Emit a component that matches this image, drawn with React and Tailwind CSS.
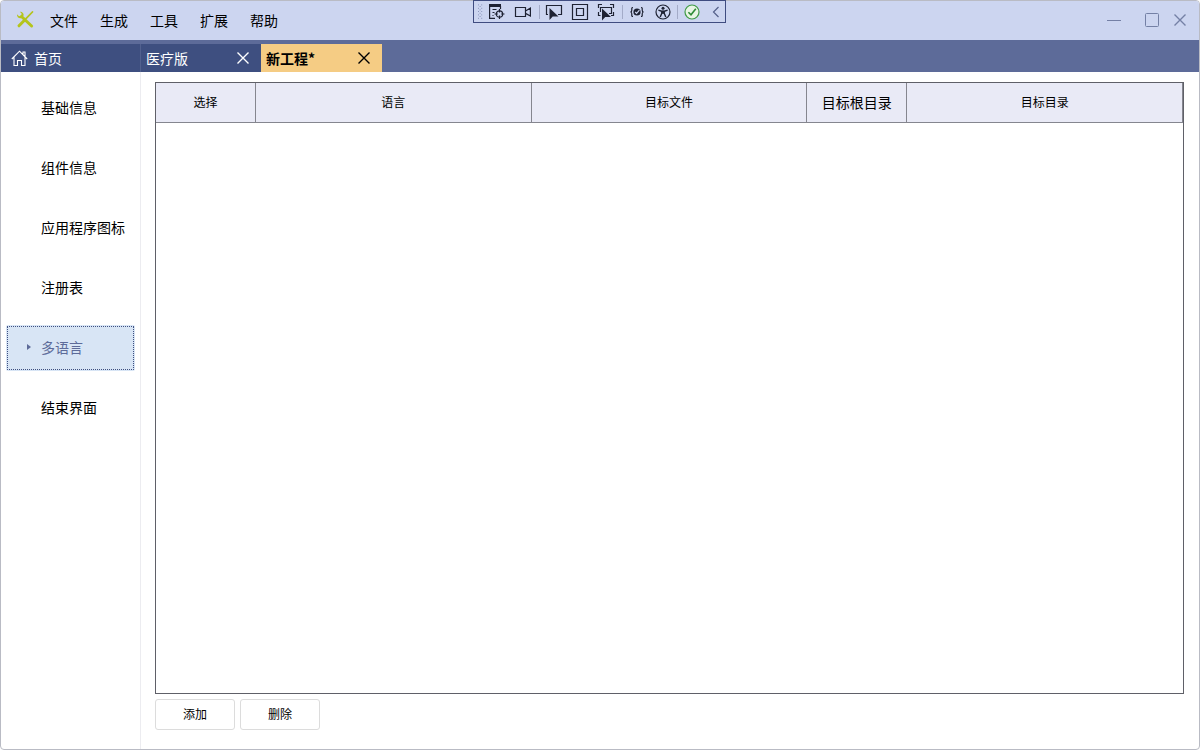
import React, { useState } from 'react'

const menuItems = ['文件', '生成', '工具', '扩展', '帮助']

const sections = ['基础信息', '组件信息', '应用程序图标', '注册表', '多语言', '结束界面']

const columns = [
  { label: '选择', className: 'w-[100px] text-xs' },
  { label: '语言', className: 'text-xs' },
  { label: '目标文件', className: 'text-xs' },
  { label: '目标根目录', className: 'w-[100px] text-sm' },
  { label: '目标目录', className: 'text-xs' }
]

const CloseIcon = () => (
  <svg width="14" height="14" viewBox="0 0 14 14" fill="none" stroke="currentColor" strokeWidth="1.4">
    <path d="M1.5 1.5l11 11M12.5 1.5l-11 11" />
  </svg>
)

const LogoIcon = () => (
  <svg width="18" height="18" viewBox="0 0 18 18" fill="none" aria-hidden="true">
    <path d="M5.5 5.5L15.6 15" stroke="#b4c41c" strokeWidth="3" strokeLinecap="round" />
    <path d="M1 3.2L3 5.2L5.2 4.4L5.6 2.4L3.8 .7C6.2 .3 8 2.2 7.6 4.4L5.3 7.2C2.8 7.8 .7 5.8 1 3.2z" fill="#b4c41c" />
    <path d="M16.4 1L9.5 8.2" stroke="#b4c41c" strokeWidth="1.8" strokeLinecap="round" />
    <path d="M8 9.8L3 14.8" stroke="#b4c41c" strokeWidth="3" strokeLinecap="round" />
  </svg>
)

const HomeIcon = () => (
  <svg width="17" height="17" viewBox="0 0 17 17" fill="none" stroke="currentColor" strokeWidth="1.1" aria-hidden="true">
    <path d="M.8 9L8.5 1.2L16.2 9M12 4.6V2h2v4.6M3 7.2V15.5H6.5V10.5H10.5V15.5H14V7.2" />
  </svg>
)

const ToolIcon = ({ children }) => (
  <svg width="18" height="18" viewBox="0 0 18 18" fill="none" stroke="#1e2233" strokeWidth="1.2" aria-hidden="true">
    {children}
  </svg>
)

const ToolButton = ({ label, children }) => (
  <button type="button" aria-label={label} className="flex w-[18px] items-center justify-center">
    <ToolIcon>{children}</ToolIcon>
  </button>
)

const Divider = () => <span className="h-[14px] w-px bg-[#a3abc8]" />

const DebugToolbar = () => (
  <div className="absolute -top-px left-[472px] flex h-[23px] w-[253px] items-center border border-[#3f4c80] bg-[#ccd5f0] pl-1">
    <svg width="6" height="18" viewBox="0 0 6 18" fill="#6f7ba6" aria-hidden="true">
      {[0, 4, 8, 12, 16].map((y) => (
        <React.Fragment key={y}>
          <rect x="0" y={y} width="1" height="1" />
          <rect x="4" y={y} width="1" height="1" />
          {y < 16 && <rect x="2" y={y + 2} width="1" height="1" />}
        </React.Fragment>
      ))}
    </svg>
    <div className="flex items-center gap-2 pl-[5px]">
      <ToolButton label="实时可视化树">
        <path d="M1 2.5h12" strokeWidth="3" />
        <path d="M1.6 3V15.4H7M4.5 6.5h4M4.5 9.5h2M4.5 12.5h1M12.5 3v3" />
        <circle cx="11.5" cy="11" r="3.2" />
        <path d="M11.5 6v3.4M11.5 12.6v3.4M6.5 11h3.4M13.1 11h3.4" />
      </ToolButton>
      <ToolButton label="录制">
        <path d="M1.5 4.5h10v9h-10zM11.5 8L16.4 5v8L11.5 10.4" />
      </ToolButton>
    </div>
    <div className="flex items-center pl-[7px]">
      <Divider />
    </div>
    <div className="flex items-center gap-2 pl-[5px]">
      <ToolButton label="选择元素">
        <path d="M3 11.5H1.5V2.5h15v9H13" />
        <path d="M4.5 5V17l3.2-3.4 5.8-.2z" fill="#1e2233" stroke="none" />
      </ToolButton>
      <ToolButton label="布局装饰器">
        <path d="M1.5 1.5h15v15h-15zM5.5 5.5h7v7h-7z" />
      </ToolButton>
      <ToolButton label="跟踪焦点">
        <path d="M1.5 5V1.5H5M13 1.5h3.5V5M16.5 9v3.5H14M3.5 12.5H1.5V9M3.5 9V4.5h11v6h-2.5" />
        <path d="M5 5.5V17.5l3.2-3.4 5.8-.2z" fill="#1e2233" stroke="#ccd5f0" strokeWidth=".8" paintOrder="stroke" />
      </ToolButton>
    </div>
    <div className="flex items-center pl-[7px]">
      <Divider />
    </div>
    <div className="flex items-center gap-2 pl-[5px]">
      <ToolButton label="绑定失败">
        <path d="M5 4.5C3.4 4.5 3.8 5.8 3.8 7S3.2 9 2.4 9c.8 0 1.4.6 1.4 2s-.4 2.5 1.2 2.5M13 4.5c1.6 0 1.2 1.3 1.2 2.5s.6 2 1.4 2c-.8 0-1.4.6-1.4 2s.4 2.5-1.2 2.5" />
        <circle cx="9" cy="9" r="3.6" fill="#1e2233" stroke="none" />
        <path d="M7.2 9l1.4 1.4L11.4 7.2" stroke="#ccd5f0" />
      </ToolButton>
      <ToolButton label="辅助功能">
        <circle cx="9" cy="9" r="7" />
        <circle cx="9" cy="5.2" r="1.5" fill="#1e2233" stroke="none" />
        <path d="M4.4 7.2L7.6 8.2H10.4L13.6 7.2M7.8 8.2V10.4L6.2 14M10.2 8.2V10.4L11.8 14" strokeWidth="1.4" />
        <path d="M7.6 7.8h2.8v3H7.6z" fill="#1e2233" stroke="none" />
      </ToolButton>
    </div>
    <div className="flex items-center pl-[5px]">
      <Divider />
    </div>
    <div className="flex items-center gap-[6px] pl-[5px]">
      <ToolButton label="热重载">
        <circle cx="9" cy="9" r="7" fill="#e8f5e4" stroke="#3f9b46" />
        <path d="M5.4 9.2L8 11.8L12.8 5.8" stroke="#2e8b36" strokeWidth="1.6" />
      </ToolButton>
      <ToolButton label="收起">
        <path d="M11.5 4L6.5 9L11.5 14" stroke="#55608a" />
      </ToolButton>
    </div>
  </div>
)

const TitleBar = () => (
  <header className="flex h-[39px] shrink-0 items-center rounded-t-[3px] bg-[#ccd5f0] pb-px pl-[15px]">
    <LogoIcon />
    <nav className="flex gap-[22px] pl-4">
      {menuItems.map((item) => (
        <button key={item} type="button" className="text-sm">
          {item}
        </button>
      ))}
    </nav>
    <div className="ml-auto flex items-center pr-3 text-[#7480a5]">
      <button type="button" aria-label="最小化" className="mr-6">
        <svg width="14" height="14" viewBox="0 0 14 14" stroke="currentColor">
          <path d="M0 7.5h14" />
        </svg>
      </button>
      <button type="button" aria-label="最大化" className="mr-[14px]">
        <svg width="14" height="14" viewBox="0 0 14 14" fill="none" stroke="currentColor">
          <rect x=".5" y=".5" width="13" height="13" rx="1" />
        </svg>
      </button>
      <button type="button" aria-label="关闭">
        <CloseIcon />
      </button>
    </div>
  </header>
)

const TabBar = () => (
  <div className="flex h-8 shrink-0 bg-[#5d6b99] pt-1 text-sm">
    <button type="button" className="flex w-[139px] items-center gap-[6px] bg-[#3e4f80] pl-[10px] text-white">
      <HomeIcon />
      首页
    </button>
    <div className="flex w-[121px] items-center justify-between border-l border-[#52618f] bg-[#3e4f80] pr-[11px] pl-[5px] text-white">
      <button type="button">医疗版</button>
      <button type="button" aria-label="关闭医疗版">
        <CloseIcon />
      </button>
    </div>
    <div className="flex w-[121px] items-center justify-between bg-[#f5cc84] pr-[11px] pl-[5px]">
      <button type="button" className="font-bold">新工程*</button>
      <button type="button" aria-label="关闭新工程">
        <CloseIcon />
      </button>
    </div>
  </div>
)

const App = () => {
  const [active, setActive] = useState('多语言')

  return (
    <div className="relative flex min-h-screen flex-col rounded-[4px] border border-[#b9bbc4] bg-white font-['Noto_Sans_CJK_SC',sans-serif] text-black">
      <TitleBar />
      <DebugToolbar />
      <TabBar />

      <div className="flex grow">
        <aside className="w-[140px] shrink-0 border-r border-[#ececf0] pt-[13px] pr-[5px] pl-[5px]">
          <ul className="flex flex-col gap-[14px]">
            {sections.map((section) => (
              <li key={section}>
                <button
                  type="button"
                  onClick={() => setActive(section)}
                  className={
                    active === section
                      ? 'flex h-[46px] w-full items-center rounded-xs bg-[#d8e5f5] pb-[2px] text-sm text-[#5d6b99] outline -outline-offset-2 outline-dotted outline-[#3e4f80]'
                      : 'flex h-[46px] w-full items-center pb-[2px] text-sm'
                  }
                >
                  <span className="flex w-[35px] shrink-0 pl-[21px]">
                    {active === section && (
                      <svg width="4" height="6" viewBox="0 0 4 6" fill="currentColor" aria-hidden="true">
                        <path d="M0 0L4 3L0 6z" />
                      </svg>
                    )}
                  </span>
                  {section}
                </button>
              </li>
            ))}
          </ul>
        </aside>

        <main className="flex grow flex-col pt-[10px] pr-[15px] pb-[19px] pl-[14px]">
          <div className="grow border border-[#5f6068]">
            <table className="w-full table-fixed border-separate border-spacing-0">
              <thead>
                <tr>
                  {columns.map((column) => (
                    <th
                      key={column.label}
                      scope="col"
                      className={`h-10 border-r border-b border-[#85868f] bg-[#e9eaf6] p-0 pb-[2px] font-normal ${column.className}`}
                    >
                      {column.label}
                    </th>
                  ))}
                </tr>
              </thead>
              <tbody />
            </table>
          </div>

          <div className="flex gap-[5px] pt-[5px]">
            <button type="button" className="h-[31px] w-20 rounded-[3px] border border-[#dcdcdc] pb-[2px] text-xs">
              添加
            </button>
            <button type="button" className="h-[31px] w-20 rounded-[3px] border border-[#dcdcdc] pb-[2px] text-xs">
              删除
            </button>
          </div>
        </main>
      </div>
    </div>
  )
}

export default App
